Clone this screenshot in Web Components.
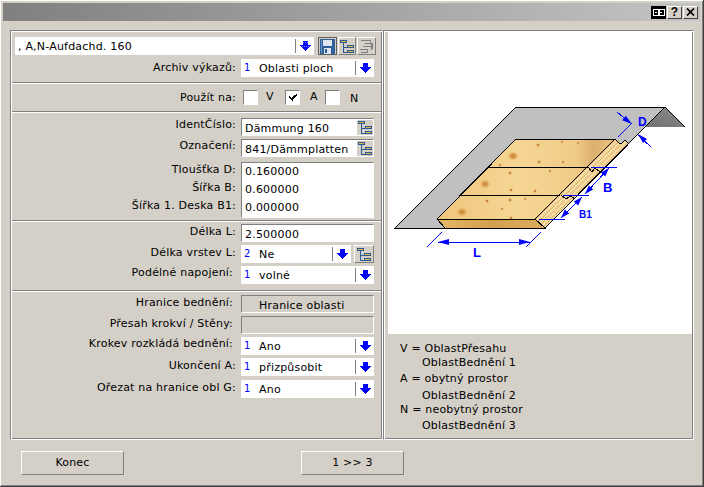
<!DOCTYPE html>
<html><head><meta charset="utf-8">
<style>
html,body{margin:0;padding:0;background:#d4d0c8}
body{font:11px/14px "DejaVu Sans",sans-serif;letter-spacing:.2px;color:#000;width:704px;height:487px;overflow:hidden}
x-section.s1{padding:5px 0 5px 0;--gap:4px}
x-section.s2{padding:6px 0 6px 0}
x-section.s3{padding:5px 0 4px 0;--gap:3px}
x-section.s4{padding:2px 0 6px 0;--gap:3px}
x-section.s5{padding:3px 0 0 0;--gap:3px;flex:1}
</style></head><body>
<script>
const def=(name,css,html,extra={})=>{
  const t=document.createElement('template');
  t.innerHTML=`<style>${css}</style>${html}`;
  customElements.define(name,class extends HTMLElement{
    constructor(){super();this.attachShadow({mode:'open'}).appendChild(t.content.cloneNode(true));}
    connectedCallback(){extra.init&&extra.init.call(this,this.shadowRoot)}
  });
};
const A=(dotted)=>`<svg width="13" height="11" viewBox="0 0 13 11" shape-rendering="crispEdges"><path d="M4 0h5v4h3v1h-1v1h-1v1h-1v1h-1v1h-1v1h-1v-1h-1v-1h-1v-1h-1v-1h-1v-1h-1v-1h3z" fill="#0000ff"/>${dotted?'<path d="M4 1h1v1h-1zM6 1h1v1h-1zM8 1h1v1h-1zM3 5h1v1h-1zM5 5h1v1h-1zM7 5h1v1h-1zM9 5h1v1h-1z" fill="#8080ff"/>':''}</svg>`;
const TREE=`<svg width="15" height="15" viewBox="0 0 15 15" shape-rendering="crispEdges"><path d="M3 4v9h4M3 8h4" fill="none" stroke="#2a5a96"/><rect x="0.5" y="1.5" width="6" height="2" fill="#e8b840" stroke="#2a5a96"/><rect x="7.5" y="6.5" width="6" height="2" fill="#e8b840" stroke="#2a5a96"/><rect x="7.5" y="11.5" width="6" height="2" fill="#e8b840" stroke="#2a5a96"/></svg>`;

def('x-window',`:host{display:flex;flex-direction:column;box-sizing:border-box;width:704px;height:487px;padding:3px 3px 2px;background:#d4d0c8;
  border-right:1px solid #404040;border-bottom:1px solid #404040;box-shadow:inset 1px 1px 0 #fff,inset -1px -1px 0 #808080}
  .main{display:flex;margin:9px 0 0 7px;height:410px}
  .foot{display:flex;margin:11px 0 0 18px;gap:177px}
  `,`<slot name="title"></slot><div class="main"><slot name="left"></slot><slot name="right"></slot></div><div class="foot"><slot name="foot"></slot></div>`);

def('x-titlebar',`:host{display:flex;justify-content:flex-end;align-items:center;gap:1px;height:18px;padding-right:2px;background:linear-gradient(90deg,#808080,#c4c4c4)}
  b{box-sizing:border-box;width:15px;height:13px;display:flex;align-items:center;justify-content:center;background:#d4d0c8;border:1px solid;border-color:#fff #404040 #404040 #fff;font:bold 12px/11px "Liberation Sans",sans-serif;color:#000;letter-spacing:0}
  b.k{background:#000;border-color:#000}`,
  `<b class="k"><svg width="13" height="9" viewBox="0 0 13 9" shape-rendering="crispEdges"><path d="M1 1h5v6h-5zM7 1h5v6h-5zM3 4h2M8 4h2M6 4h1" fill="none" stroke="#fff"/></svg></b><b>?</b><b><svg width="9" height="8" viewBox="0 0 9 8"><path d="M1 0.5l7 7M8 0.5l-7 7" stroke="#000" stroke-width="1.7"/></svg></b>`);

def('x-group',`:host{display:flex;flex-direction:column;box-sizing:border-box;width:373px;border:1px solid;border-color:#808080 #fff #fff #808080;box-shadow:inset 1px 1px 0 #fff,inset -1px -1px 0 #808080;padding:1px}`,`<slot></slot>`);

def('x-section',`:host{display:flex;flex-direction:column;gap:var(--gap,3px);border-bottom:1px solid #808080;box-shadow:0 1px 0 #fff;margin-bottom:1px}
  :host(:last-child){border-bottom:0;box-shadow:none;margin-bottom:0}`,`<slot></slot>`);

def('x-row',`:host{display:grid;grid-template-columns:224px 133px;column-gap:5px;height:18px}
  .l{text-align:right;line-height:14px;white-space:nowrap;padding-right:var(--lp,0);padding-top:var(--lt,1px)}
  .c{display:flex;gap:3px;min-width:0}`,
  `<div class="l"><slot name="label"></slot></div><div class="c"><slot></slot></div>`);

def('x-combo',`:host{flex:1;min-width:0;display:flex;align-items:center;box-sizing:border-box;height:18px;background:#fff;padding-left:3px;white-space:nowrap}
  .n{width:15px;color:#0000ff;font:10px/14px "DejaVu Sans",sans-serif}
  .t{flex:1;line-height:14px;padding-top:1px}
  .s{width:1px;height:14px;background:#808080;margin-right:3px}
  .a{width:13px;margin-right:2px;height:11px;display:flex}`,
  `<span class="n"></span><span class="t"><slot></slot></span><span class="s"></span><span class="a"></span>`,
  {init(r){r.querySelector('.n').textContent=this.getAttribute('n')||'';if(!this.hasAttribute('n'))r.querySelector('.n').style.width='0';r.querySelector('.a').innerHTML=A(this.hasAttribute('dotted'));}});

def('x-field',`:host{flex:1;display:block;box-sizing:border-box;height:18px;background:#fff;border:1px solid;border-color:#808080 #fff #fff #808080;padding:2px 0 0 3px;line-height:15px;white-space:nowrap;position:relative;overflow:hidden}
  :host([off]){background:#d4d0c8;padding-left:17px;border-color:#808080 #fff #fff #808080;}`,`<slot></slot>`);

def('x-ibtn',`:host{flex:none;box-sizing:border-box;width:19px;height:18px;display:flex;align-items:center;justify-content:center;background:#d4d0c8;border:1px solid;border-color:#fff #808080 #808080 #fff;outline:0}
  :host([kind=save]){border-color:#606060}
  :host([kind=tree]){width:18px}
  :host([plain]){position:absolute;right:0;top:1px;width:16px;height:15px;border:0}`,
  `<span style="display:flex"></span>`,{init(r){
    const k=this.getAttribute('kind');
    r.querySelector('span').innerHTML=
     k==='save'?`<svg width="15" height="15" viewBox="0 0 15 15" shape-rendering="crispEdges"><path d="M0 0h15v15h-15z" fill="#2f5f98"/><path d="M3 1h9v6h-9z" fill="#dfe6f2"/><path d="M4 9h7v6h-7z" fill="#dfe6f2"/><path d="M5 10h2v4h-2z" fill="#2f5f98"/><path d="M1 1h1v13h-1z" fill="#6e96c4"/></svg>`:
     k==='off'?`<svg width="15" height="15" viewBox="0 0 15 15" shape-rendering="crispEdges"><path d="M2 1.5h9v3M6 4.500h6v3M4 7.500h8v3M1 10.500h7v3h-6" fill="none" stroke="#808080"/><path d="M12 4h2v6h-2z" fill="#808080"/></svg>`:TREE;
  }});

def('x-check',`:host{flex:none;box-sizing:border-box;width:15px;height:15px;display:block;background:#fff;border:1px solid;border-color:#808080 #fff #fff #808080}
  svg{display:block;margin:2px}`,`<svg width="10" height="9" viewBox="0 0 10 9" shape-rendering="crispEdges"></svg>`,
  {init(r){if(this.hasAttribute('on'))r.querySelector('svg').innerHTML='<path d="M8 1h1v2h-1v1h-1v1h-1v1h-1v2h-1v-1h-1v-1h-1v-1h-1v-2h1v1h1v1h1v-1h1v-1h1v-1h1z"/>';}});

def('x-checks',`:host{display:flex;align-items:flex-start;padding-left:2px;height:15px;line-height:14px}
  ::slotted(span){display:block;width:0;white-space:nowrap}`,`<slot></slot>`);

def('x-multi',`:host{display:grid;grid-template-columns:224px 133px;column-gap:5px;height:54px}
  .l{text-align:right;line-height:18px;white-space:pre;margin-top:-1px}
  .v{background:#fff;border:1px solid;border-color:#808080 #fff #fff #808080;box-sizing:border-box;padding-left:3px;line-height:18px}`,
  `<div class="l"><slot name="label"></slot></div><div class="v"><slot></slot></div>`);

def('x-btn',`:host{display:flex;align-items:center;justify-content:center;box-sizing:border-box;width:103px;height:24px;background:#d4d0c8;border:1px solid;border-color:#fff #808080 #808080 #fff;line-height:14px}`,`<slot></slot>`);

def('x-right',`:host{display:flex;flex-direction:column;box-sizing:border-box;width:311px;border:1px solid;border-color:#808080 #fff #fff #808080;box-shadow:inset 1px 1px 0 #fff,inset -1px -1px 0 #808080;padding:1px 1px 1px 4px}`,`<slot></slot>`);

def('x-legend',`:host{display:block;padding:8px 0 0 12px;line-height:14px}
  ::slotted(div){white-space:nowrap}`,`<slot></slot>`);

const K=[[538,145,1.3],[578,143,.8],[562,142,.8],[539,162,1.2],[563,162,1],[500,165,1],[510,173,1.3],[550,171,1],[511,190,1.2],[535,191,1.2],[487,201,1.2],[510,200,1.2],[525,199,.8],[502,209,.8],[465,220,.8],[486,225,1.3],[511,218,1.2],[511,225,1.3]];
const BIG=[[513,156],[485,184],[462,212]];
def('x-figure',`:host{display:block;height:302px;background:#fff}svg{display:block}
  text{font:bold 13px "Liberation Sans",sans-serif;fill:#0000ff;letter-spacing:0}`,
`<svg width="304" height="302" viewBox="388 32 304 302">
<defs>
<linearGradient id="w" x1="0" x2="1" y1="0" y2="0"><stop offset="0" stop-color="#eec47c"/><stop offset=".45" stop-color="#f6d694"/><stop offset=".78" stop-color="#f0cc88"/><stop offset=".88" stop-color="#dcb070"/><stop offset="1" stop-color="#ecc47c"/></linearGradient>
<linearGradient id="f" x1="0" x2="1" y1="0" y2="0"><stop offset="0" stop-color="#e4b868"/><stop offset=".5" stop-color="#d4a050"/><stop offset="1" stop-color="#dcac5c"/></linearGradient>
<linearGradient id="d" x1="0" x2="1" y1="1" y2="0"><stop offset="0" stop-color="#707070"/><stop offset="1" stop-color="#8c8c8c"/></linearGradient>
<pattern id="g" width="5" height="5" patternUnits="userSpaceOnUse"><rect width="5" height="5" fill="#f6dca8"/><path d="M0 5L5 0" stroke="#e8bc70" stroke-width="1.3"/></pattern>
<radialGradient id="kn"><stop offset="0" stop-color="#c07828"/><stop offset=".45" stop-color="#dca050"/><stop offset="1" stop-color="#e8c078" stop-opacity="0"/></radialGradient>
</defs>
<path d="M665 107L685 127H645Z" fill="url(#d)"/>
<path d="M516 107H665L545 228H395Z" fill="#c0c0c0"/>
<path d="M437 219L516 139H615L535 219Z" fill="url(#w)"/>
<g id="knots"></g>
<path d="M615 139L622 143L625 140L628 143L545 228L535 219Z" fill="url(#g)"/>
<path d="M437 219H535L545 228H445Z" fill="url(#f)"/>
<g fill="none" stroke="#000" shape-rendering="crispEdges">
<path d="M665 107L685 127M395 228L516 107H665L545 228Z"/>
<path d="M437 219L516 139H615L535 219H437L445 228M535 219L545 228H395"/>
<path d="M488 167H588M461 195H560"/>
<path d="M615 139L619 143L622 143L625 140L628 143"/>
<path d="M588 167L592 172L595 168L600 172M561 195L566 199L571 196L575 199"/>
</g>
<g fill="none" stroke="#0000ff" shape-rendering="crispEdges">
<path d="M591 167.500H617M563 195.500H589M539 219.500H565"/>
<path d="M585 194L609 168M561 218L582 197"/>
<path d="M438 242H530M427 247L442 232M526 247L541 232"/>
<path d="M618 137L632 123M617 112L630 123M638 135L651 147"/>
</g>
<g fill="#0000ff">
<path d="M609 168L605.200 176.600L600.800 172.600ZM585 194L593.200 189.400L588.800 185.400ZM582 197L578.200 205.600L573.800 201.600ZM561 218L569.200 213.400L564.800 209.400Z"/>
<path d="M438 242L449 239V245ZM530 242L519 239V245Z"/>
<path d="M632 124L625.800 115.700L622.200 120.300ZM638 134L647 139L643 143Z"/>
</g>
<text x="603" y="192">B</text>
<text x="579" y="218" style="font-size:10px">B1</text>
<text x="473" y="257">L</text>
<text x="638" y="125.500" style="font-size:12px">D</text>
</svg>`,{init(r){
  const g=r.getElementById('knots');let s='';
  for(const [x,y] of BIG) s+=`<ellipse cx="${x}" cy="${y}" rx="6" ry="5" fill="url(#kn)"/><circle cx="${x}" cy="${y}" r="1.6" fill="#cc9040"/>`;
  for(const [x,y,a] of K) s+=`<circle cx="${x}" cy="${y}" r="${a+1}" fill="url(#kn)"/><circle cx="${x}" cy="${y}" r="${a*.6}" fill="#b87830"/>`;
  g.innerHTML=s;
}});
</script>

<x-window>
  <x-titlebar slot="title"></x-titlebar>
  <x-group slot="left">
    <x-section class="s1">
      <div style="display:flex;height:18px;margin-left:3px;gap:4px;width:361px">
        <x-combo dotted>, A,N-Aufdachd. 160</x-combo>
        <div style="display:flex;gap:1px"><x-ibtn kind="save"></x-ibtn><x-ibtn kind="tree"></x-ibtn><x-ibtn kind="off"></x-ibtn></div>
      </div>
      <x-row style="--lt:2px"><span slot="label">Archiv výkazů:</span><x-combo n="1">Oblasti ploch</x-combo></x-row>
    </x-section>
    <x-section class="s2">
      <x-row style="height:15px"><span slot="label">Použít na:</span>
        <x-checks>
          <x-check></x-check><span style="margin-left:8px">V</span>
          <x-check on style="margin-left:19px"></x-check><span style="margin-left:10px">A</span>
          <x-check style="margin-left:15px"></x-check><span style="margin-left:10px;margin-top:2px">N</span>
        </x-checks>
      </x-row>
    </x-section>
    <x-section class="s3">
      <x-row style="--lt:0px"><span slot="label">IdentČíslo:</span><x-field>Dämmung 160<x-ibtn kind="tree" plain></x-ibtn></x-field></x-row>
      <x-row style="--lt:0px"><span slot="label">Označení:</span><x-field>841/Dämmplatten<x-ibtn kind="tree" plain></x-ibtn></x-field></x-row>
      <x-multi style="margin-top:2px"><span slot="label">Tloušťka D:
Šířka B:
Šířka 1. Deska B1:</span><span>0.160000<br>0.600000<br>0.000000</span></x-multi>
    </x-section>
    <x-section class="s4">
      <x-row><span slot="label">Délka L:</span><x-field>2.500000</x-field></x-row>
      <x-row><span slot="label">Délka vrstev L:</span><x-combo n="2">Ne</x-combo><x-ibtn kind="tree" style="width:20px"></x-ibtn></x-row>
      <x-row style="--lp:3px;--lt:0px"><span slot="label">Podélné napojení:</span><x-combo n="1">volné</x-combo></x-row>
    </x-section>
    <x-section class="s5">
      <x-row style="--lp:3px"><span slot="label">Hranice bednění:</span><x-field off>Hranice oblasti</x-field></x-row>
      <x-row style="--lp:3px"><span slot="label">Přesah krokví / Stěny:</span><x-field off></x-field></x-row>
      <x-row style="--lp:3px;--lt:0px"><span slot="label">Krokev rozkládá bednění:</span><x-combo n="1">Ano</x-combo></x-row>
      <x-row><span slot="label">Ukončení A:</span><x-combo n="1">přizpůsobit</x-combo></x-row>
      <x-row style="margin-top:1px"><span slot="label">Ořezat na hranice obl G:</span><x-combo n="1">Ano</x-combo></x-row>
    </x-section>
  </x-group>
  <x-right slot="right">
    <x-figure></x-figure>
    <x-legend>
      <div>V = OblastPřesahu</div>
      <div style="padding-left:22px">OblastBednění 1</div>
      <div style="margin-top:2px">A = obytný prostor</div>
      <div style="padding-left:22px;margin-top:3px">OblastBednění 2</div>
      <div>N = neobytný prostor</div>
      <div style="padding-left:22px;margin-top:2px">OblastBednění 3</div>
    </x-legend>
  </x-right>
  <x-btn slot="foot">Konec</x-btn>
  <x-btn slot="foot">1 &gt;&gt; 3</x-btn>
</x-window>
</body></html>
